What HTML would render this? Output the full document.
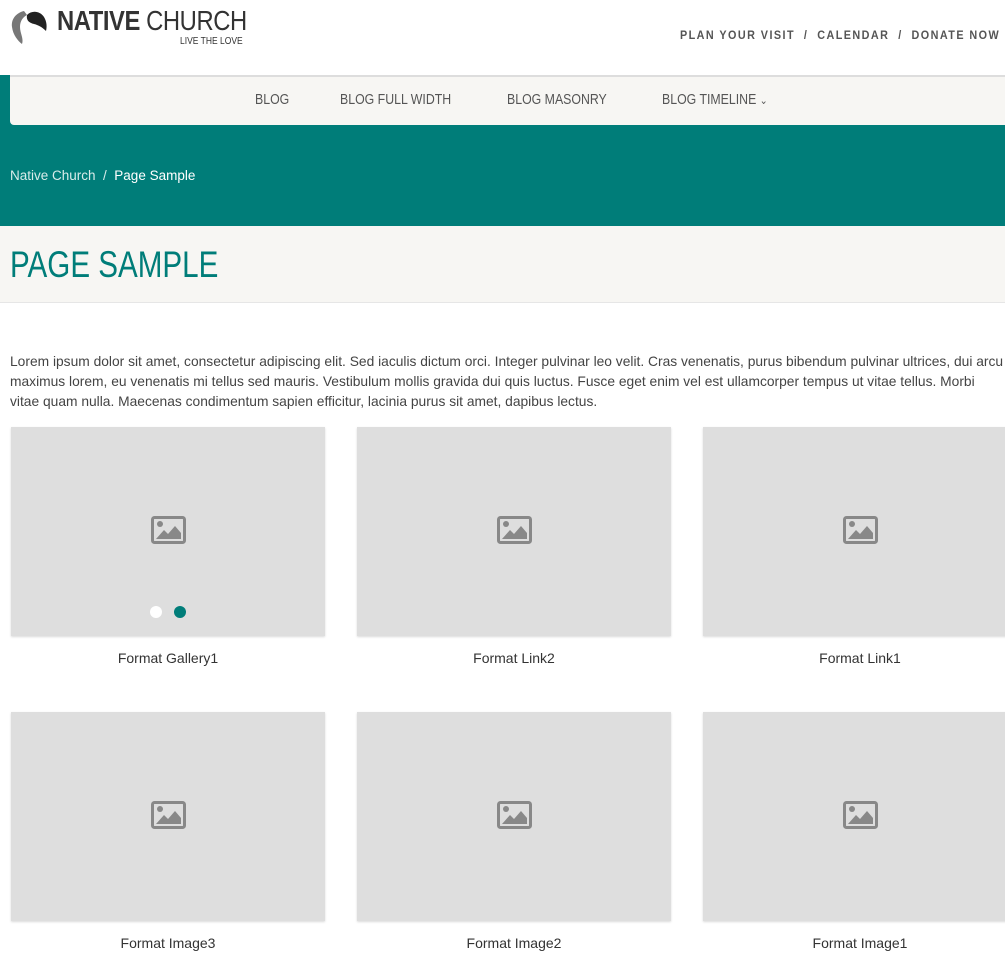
<!DOCTYPE html>
<html><head><meta charset="utf-8"><style>
*{margin:0;padding:0;box-sizing:border-box}
body{width:1005px;height:977px;overflow:hidden;background:#fff;font-family:"Liberation Sans",sans-serif;color:#333;position:relative}
.abs{position:absolute}
.sx{transform-origin:0 0;white-space:nowrap}
.card{position:absolute;width:314px;height:209px;background:#dedede;box-shadow:0 1px 2px rgba(0,0,0,.15)}
.card svg{position:absolute;left:140px;top:89px}
.cap{position:absolute;width:314px;text-align:center;font-size:14px;color:#333}
</style></head><body>
<svg class="abs" style="left:10px;top:9px" width="38" height="36" viewBox="0 0 38 36">
<path d="M14 2 C6 4 1 10 2 18 C3 26 8 32 12 35 C14 30 10 24 10 18 C10 12 13 8 17 6 Z" fill="#777"/>
<path d="M17 6 C22 1 30 2 34 8 C37 13 37 18 36 22 C32 18 28 16 24 15 C20 14 16 12 17 6 Z" fill="#222"/>
</svg>
<div class="abs sx" style="left:57px;top:5px;font-size:28px;color:#333;letter-spacing:-0.5px;transform:scaleX(0.85)"><b>NATIVE</b> CHURCH</div>
<div class="abs sx" style="left:180px;top:36px;font-size:10px;color:#333;transform:scaleX(0.85)">LIVE THE LOVE</div>
<div class="abs sx" style="left:680px;top:28px;font-size:12px;font-weight:bold;letter-spacing:1.6px;color:#555;transform:scaleX(0.9)">PLAN YOUR VISIT &nbsp;/&nbsp; CALENDAR &nbsp;/&nbsp; DONATE NOW</div>
<div class="abs" style="left:0;top:75px;width:1005px;height:151px;background:#007d79"></div>
<div class="abs" style="left:10px;top:75px;width:995px;height:50px;background:#f7f6f3;border-top:2px solid #ddd;border-radius:0 0 0 4px"></div>
<div class="abs" style="top:92px;left:0;width:1005px;font-size:14.5px;color:#555">
<span class="abs sx" style="left:255px;transform:scaleX(0.85)">BLOG</span>
<span class="abs sx" style="left:340px;transform:scaleX(0.85)">BLOG FULL WIDTH</span>
<span class="abs sx" style="left:507px;transform:scaleX(0.85)">BLOG MASONRY</span>
<span class="abs sx" style="left:662px;transform:scaleX(0.85)">BLOG TIMELINE <span style="font-size:11px">⌄</span></span>
</div>
<div class="abs" style="left:10px;top:168px;font-size:13.5px;color:#d8ecea">Native Church &nbsp;/&nbsp; <span style="color:#fff">Page Sample</span></div>
<div class="abs" style="left:0;top:226px;width:1005px;height:77px;background:#f7f6f3;border-bottom:1px solid #e6e6e6"></div>
<div class="abs sx" style="left:10px;top:244px;font-size:37px;color:#007d79;transform:scaleX(0.8)">PAGE SAMPLE</div>
<div class="abs" style="left:10px;top:352px;width:1030px;font-size:13.8px;line-height:20px;color:#444;white-space:nowrap">Lorem ipsum dolor sit amet, consectetur adipiscing elit. Sed iaculis dictum orci. Integer pulvinar leo velit. Cras venenatis, purus bibendum pulvinar ultrices, dui arcu<br>maximus lorem, eu venenatis mi tellus sed mauris. Vestibulum mollis gravida dui quis luctus. Fusce eget enim vel est ullamcorper tempus ut vitae tellus. Morbi<br>vitae quam nulla. Maecenas condimentum sapien efficitur, lacinia purus sit amet, dapibus lectus.</div>

<div class="card" style="left:11px;top:427px"><svg width="35" height="28" viewBox="0 0 35 28"><rect x="1.5" y="1.5" width="32" height="25" rx="2" fill="none" stroke="#888" stroke-width="3"/><circle cx="9" cy="8" r="3" fill="#888"/><path d="M5 23 L13 14 L17 18 L24 10 L30 17 V23 Z" fill="#888"/></svg>
<div class="abs" style="left:139px;top:179px;width:12px;height:12px;border-radius:50%;background:#fff"></div>
<div class="abs" style="left:163px;top:179px;width:12px;height:12px;border-radius:50%;background:#007d79"></div></div>
<div class="card" style="left:357px;top:427px"><svg width="35" height="28" viewBox="0 0 35 28"><rect x="1.5" y="1.5" width="32" height="25" rx="2" fill="none" stroke="#888" stroke-width="3"/><circle cx="9" cy="8" r="3" fill="#888"/><path d="M5 23 L13 14 L17 18 L24 10 L30 17 V23 Z" fill="#888"/></svg></div>
<div class="card" style="left:703px;top:427px"><svg width="35" height="28" viewBox="0 0 35 28"><rect x="1.5" y="1.5" width="32" height="25" rx="2" fill="none" stroke="#888" stroke-width="3"/><circle cx="9" cy="8" r="3" fill="#888"/><path d="M5 23 L13 14 L17 18 L24 10 L30 17 V23 Z" fill="#888"/></svg></div>
<div class="cap" style="left:11px;top:650px">Format Gallery1</div>
<div class="cap" style="left:357px;top:650px">Format Link2</div>
<div class="cap" style="left:703px;top:650px">Format Link1</div>

<div class="card" style="left:11px;top:712px"><svg width="35" height="28" viewBox="0 0 35 28"><rect x="1.5" y="1.5" width="32" height="25" rx="2" fill="none" stroke="#888" stroke-width="3"/><circle cx="9" cy="8" r="3" fill="#888"/><path d="M5 23 L13 14 L17 18 L24 10 L30 17 V23 Z" fill="#888"/></svg></div>
<div class="card" style="left:357px;top:712px"><svg width="35" height="28" viewBox="0 0 35 28"><rect x="1.5" y="1.5" width="32" height="25" rx="2" fill="none" stroke="#888" stroke-width="3"/><circle cx="9" cy="8" r="3" fill="#888"/><path d="M5 23 L13 14 L17 18 L24 10 L30 17 V23 Z" fill="#888"/></svg></div>
<div class="card" style="left:703px;top:712px"><svg width="35" height="28" viewBox="0 0 35 28"><rect x="1.5" y="1.5" width="32" height="25" rx="2" fill="none" stroke="#888" stroke-width="3"/><circle cx="9" cy="8" r="3" fill="#888"/><path d="M5 23 L13 14 L17 18 L24 10 L30 17 V23 Z" fill="#888"/></svg></div>
<div class="cap" style="left:11px;top:935px">Format Image3</div>
<div class="cap" style="left:357px;top:935px">Format Image2</div>
<div class="cap" style="left:703px;top:935px">Format Image1</div>
</body></html>
